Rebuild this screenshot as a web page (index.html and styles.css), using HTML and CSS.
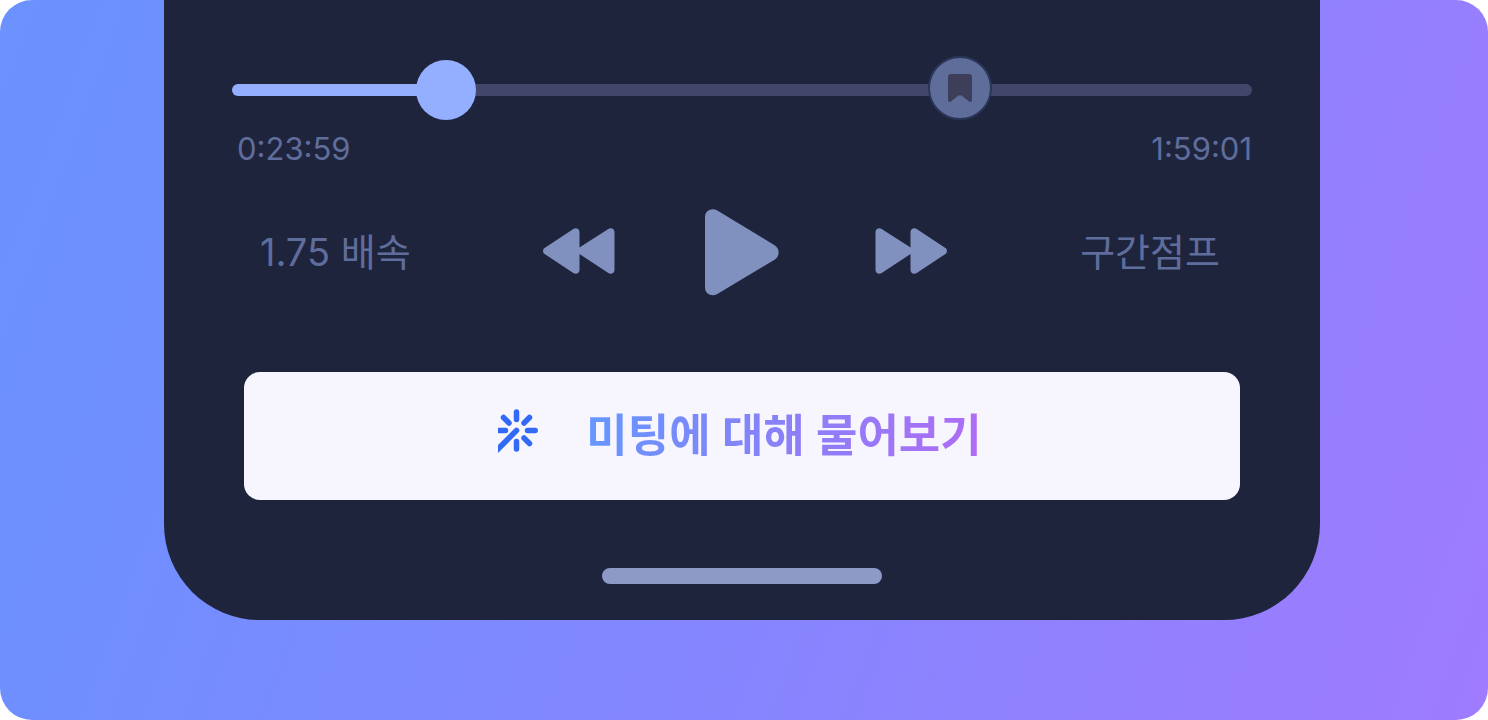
FILE: index.html
```html
<!DOCTYPE html>
<html lang="ko">
<head>
  <meta charset="UTF-8"/>
  <meta name="viewport" content="width=device-width, initial-scale=1.0"/>
  <title>미팅 플레이어</title>
  <link rel="stylesheet" href="styles.css">
</head>
<body>
  <main class="stage">
    <section class="phone">
      <div class="timeline">
        <input class="seek" type="range" min="0" max="1000" value="192" aria-label="재생 위치" style="--played: 21%">
        <button class="bookmark" type="button" aria-label="북마크" style="left: 71.4%">
          <svg width="24" height="28" viewBox="0 0 24 28" aria-hidden="true">
            <path d="M3 0h18a3 3 0 0 1 3 3v23c0 2-1.800 2.500-3.200 1.300l-6.300-5a4 4 0 0 0-5 0l-6.300 5c-1.400 1.200-3.200.7-3.200-1.300V3a3 3 0 0 1 3-3z"/>
          </svg>
        </button>
      </div>

      <div class="times">
        <time>0:23:59</time>
        <time>1:59:01</time>
      </div>

      <div class="controls">
        <button class="text-button" type="button">1.75 배속</button>
        <div class="transport">
          <button type="button" aria-label="뒤로">
            <svg width="72" height="48" viewBox="0 0 72 48" aria-hidden="true">
              <path d="M1.600 20L30.300 1C33 -.8 36.500 .8 36.500 4V42C36.500 45.200 33 46.800 30.300 45L1.600 26C-.5 24.600-.5 21.400 1.600 20z"/>
              <path d="M36 19.700L65.300 1C68 -.8 71.500 .8 71.500 4V42C71.500 45.200 68 46.800 65.300 45L36 25.700z"/>
            </svg>
          </button>
          <button type="button" aria-label="재생">
            <svg width="80" height="88" viewBox="0 0 80 88" aria-hidden="true">
              <path d="M0 9C0 2.500 6.800-.7 12.300 2.500L69.500 37.200C75 40.600 75 48.400 69.500 51.800L12.300 86C6.800 89.200 0 86 0 79.500z"/>
            </svg>
          </button>
          <button type="button" aria-label="앞으로">
            <svg width="72" height="48" viewBox="0 0 72 48" aria-hidden="true">
              <path d="M70.400 20L41.700 1C39 -.8 35.500 .8 35.500 4V42C35.500 45.200 39 46.800 41.700 45L70.400 26C72.500 24.600 72.500 21.400 70.400 20z"/>
              <path d="M36 19.700L6.700 1C4 -.8 .5 .8 .5 4V42C.5 45.200 4 46.800 6.700 45L36 25.700z"/>
            </svg>
          </button>
        </div>
        <button class="text-button" type="button">구간점프</button>
      </div>

      <button class="ask" type="button">
        <svg width="40" height="54" viewBox="0 0 40 54" aria-hidden="true">
          <path d="M18.500 3v7.500M18.500 32.500v7.500M29.500 21.500h7.700M0 21.500h7.500M5.500 8.500l5.500 5.500M31.500 8.500l-5.500 5.500M31.500 34.500l-5.500-5.500M18.500 21.500L-3 43"/>
        </svg>
        <span>미팅에 대해 물어보기</span>
      </button>

      <div class="home-bar"></div>
    </section>
  </main>
</body>
</html>
```
FILE: styles.css
```css
:root {
  --panel: #1f243d;
  --accent: #94afff;
  --track: #42466a;
  --muted: #5f6d9c;
  --icon: #8090bf;
}

* {
  box-sizing: border-box;
  margin: 0;
  padding: 0;
}

body {
  background: #fff;
  font-family: Inter, "Noto Sans CJK KR", sans-serif;
}

button {
  border: none;
  background: none;
  font-family: inherit;
  cursor: pointer;
}

svg {
  display: block;
}

.stage {
  min-height: 100vh;
  padding: 0 168px 100px 164px;
  border-radius: 32px;
  background: linear-gradient(110deg, #6b92ff 0%, #6f8fff 15%, #9f7bff 100%);
}

.phone {
  padding: 60px 68px 36px;
  border-radius: 0 0 96px 96px;
  background: var(--panel);
}

/* Timeline */
.timeline {
  position: relative;
  height: 60px;
}

.seek {
  display: block;
  width: 100%;
  height: 60px;
  appearance: none;
  background: none;
}

.seek::-webkit-slider-runnable-track {
  height: 12px;
  border-radius: 6px;
  background: linear-gradient(to right, var(--accent) var(--played), var(--track) var(--played));
}

.seek::-webkit-slider-thumb {
  appearance: none;
  width: 60px;
  height: 60px;
  margin-top: -24px;
  border-radius: 50%;
  background: var(--accent);
}

.bookmark {
  position: absolute;
  top: -4px;
  display: grid;
  place-items: center;
  width: 64px;
  height: 64px;
  border: 2px solid #293657;
  border-radius: 50%;
  background: #5f6d9b;
  transform: translateX(-50%);
}

.bookmark path {
  fill: #3c3e5a;
}

.times {
  display: flex;
  justify-content: space-between;
  padding: 9px 0 0 5px;
  color: var(--muted);
  font-size: 31px;
  line-height: 40px;
}

/* Playback controls */
.controls {
  display: flex;
  align-items: center;
  justify-content: space-between;
  height: 88px;
  margin-top: 39px;
  padding: 0 32px 0 28px;
}

.transport {
  display: flex;
  align-items: center;
  gap: 90px;
}

.transport path {
  fill: var(--icon);
}

.text-button {
  color: var(--muted);
  font-size: 38px;
  line-height: 48px;
}

.ask {
  display: flex;
  align-items: center;
  justify-content: center;
  gap: 48px;
  width: calc(100% - 24px);
  height: 128px;
  margin: 76px auto 0;
  padding-right: 4px;
  border-radius: 16px;
  background: #f7f6fe;
  font-size: 45px;
  font-weight: 600;
  line-height: 64px;
}

.ask path {
  fill: none;
  stroke: #3269f6;
  stroke-width: 5.5;
  stroke-linecap: round;
}

.ask span {
  background: linear-gradient(100deg, #6498ff, #7c88fa 30%, #947bf7 65%, #b16bf5);
  background-clip: text;
  color: transparent;
}

.home-bar {
  width: 280px;
  height: 16px;
  margin: 68px auto 0;
  border-radius: 8px;
  background: #8d9ac6;
}
```
